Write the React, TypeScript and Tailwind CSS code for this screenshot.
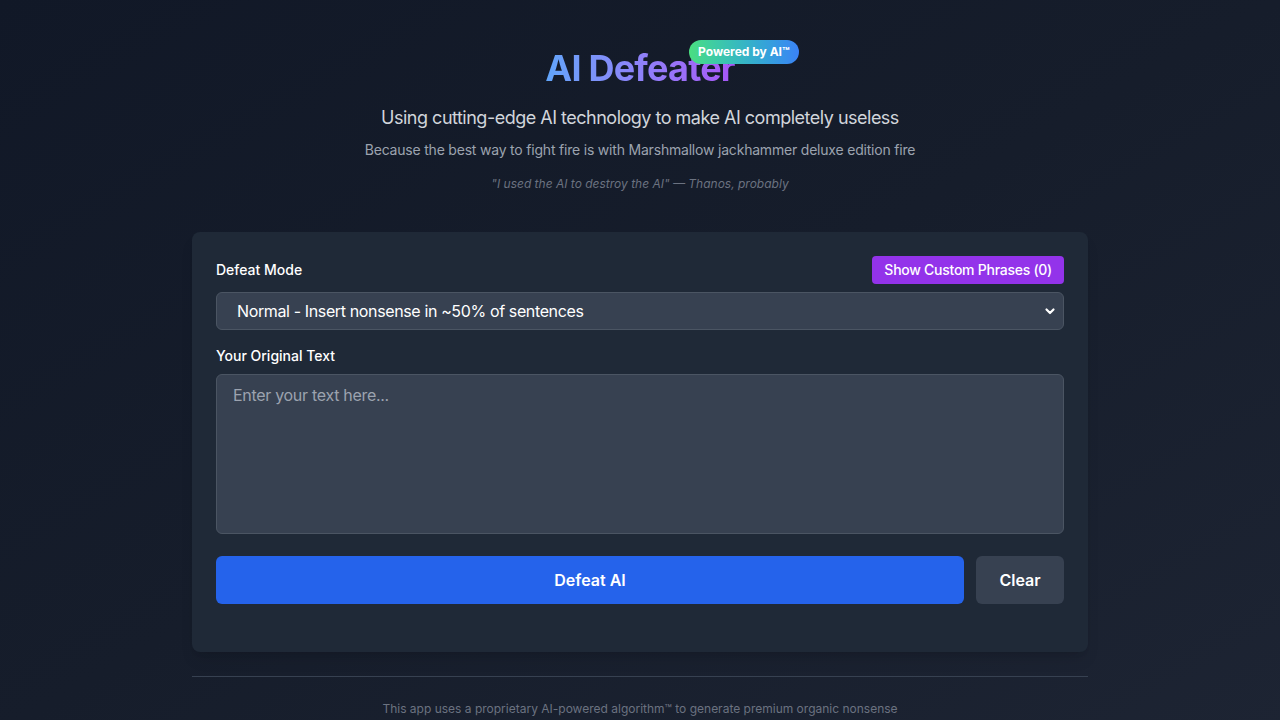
import React from "react";

export default function App() {
  return (
    <div
      className="min-h-screen bg-gradient-to-br from-[#111827] via-[#161d2b] to-[#1d2433] text-white"
      style={{ fontFamily: "Inter, 'Noto Sans', sans-serif" }}
    >
      <div className="mx-auto max-w-4xl pt-12 pb-4">
        <header className="text-center mb-10">
          <div className="relative inline-block mb-4">
            <h1 className="text-4xl font-bold leading-10 tracking-[-0.8px] bg-gradient-to-r from-[#60a5fa] to-[#a855f7] bg-clip-text text-transparent">
              AI Defeater
            </h1>
            <span className="absolute top-[-8px] right-[-64px] rounded-full bg-gradient-to-r from-[#4ade80] to-[#3b82f6] px-[9px] py-1 text-xs font-bold text-white whitespace-nowrap leading-4">
              Powered by AI™
            </span>
          </div>
          <p className="text-lg text-[#d1d5db] mb-2 leading-7 tracking-[-0.5px]">
            Using cutting-edge AI technology to make AI completely useless
          </p>
          <p className="text-sm text-[#9ca3af] leading-5 tracking-[-0.2px]">
            Because the best way to fight fire is with Marshmallow jackhammer deluxe edition fire
          </p>
          <p className="mt-4 text-xs italic text-[#6b7280] leading-4">
            "I used the AI to destroy the AI" — Thanos, probably
          </p>
        </header>

        <div className="rounded-lg bg-[#1f2937] p-6 pb-12 shadow-lg">
          <div className="mb-2 flex items-center justify-between">
            <label className="text-sm font-medium text-white">Defeat Mode</label>
            <button className="rounded bg-[#9333ea] px-3 py-1 text-sm font-medium text-white leading-5 tracking-[-0.26px]">
              Show Custom Phrases (0)
            </button>
          </div>
          <div className="relative mb-4">
            <select className="w-full appearance-none rounded-md border border-[#4b5563] bg-[#374151] pl-5 pr-10 py-[6px] text-base text-white leading-6 tracking-[-0.37px] outline-none">
              <option>Normal - Insert nonsense in ~50% of sentences</option>
            </select>
            <svg
              className="pointer-events-none absolute right-[8px] top-1/2 -translate-y-1/2"
              width="12"
              height="12"
              viewBox="0 0 12 12"
              fill="none"
            >
              <path d="M2.5 4.5 L6 8 L9.5 4.5" stroke="white" strokeWidth="2.2" strokeLinecap="round" strokeLinejoin="round" />
            </svg>
          </div>
          <label className="mb-2 block text-sm font-medium text-white leading-5">Your Original Text</label>
          <textarea
            className="block h-40 w-full resize-none rounded-md border border-[#4b5563] bg-[#374151] px-4 py-2 text-base text-white tracking-[-0.3px] placeholder-[#9ca3af] outline-none"
            placeholder="Enter your text here..."
          />
          <div className="mt-[22px] flex gap-3">
            <button className="flex-1 rounded-md bg-[#2563eb] py-3 text-base font-semibold text-white leading-6">
              Defeat AI
            </button>
            <button className="w-[88px] rounded-md bg-[#374151] py-3 text-base font-semibold text-white leading-6">
              Clear
            </button>
          </div>
        </div>

        <footer className="mt-6 border-t border-[#374151] pt-6 text-center text-xs text-[#6b7280] leading-4">
          This app uses a proprietary AI-powered algorithm™ to generate premium organic nonsense
        </footer>
      </div>
    </div>
  );
}
